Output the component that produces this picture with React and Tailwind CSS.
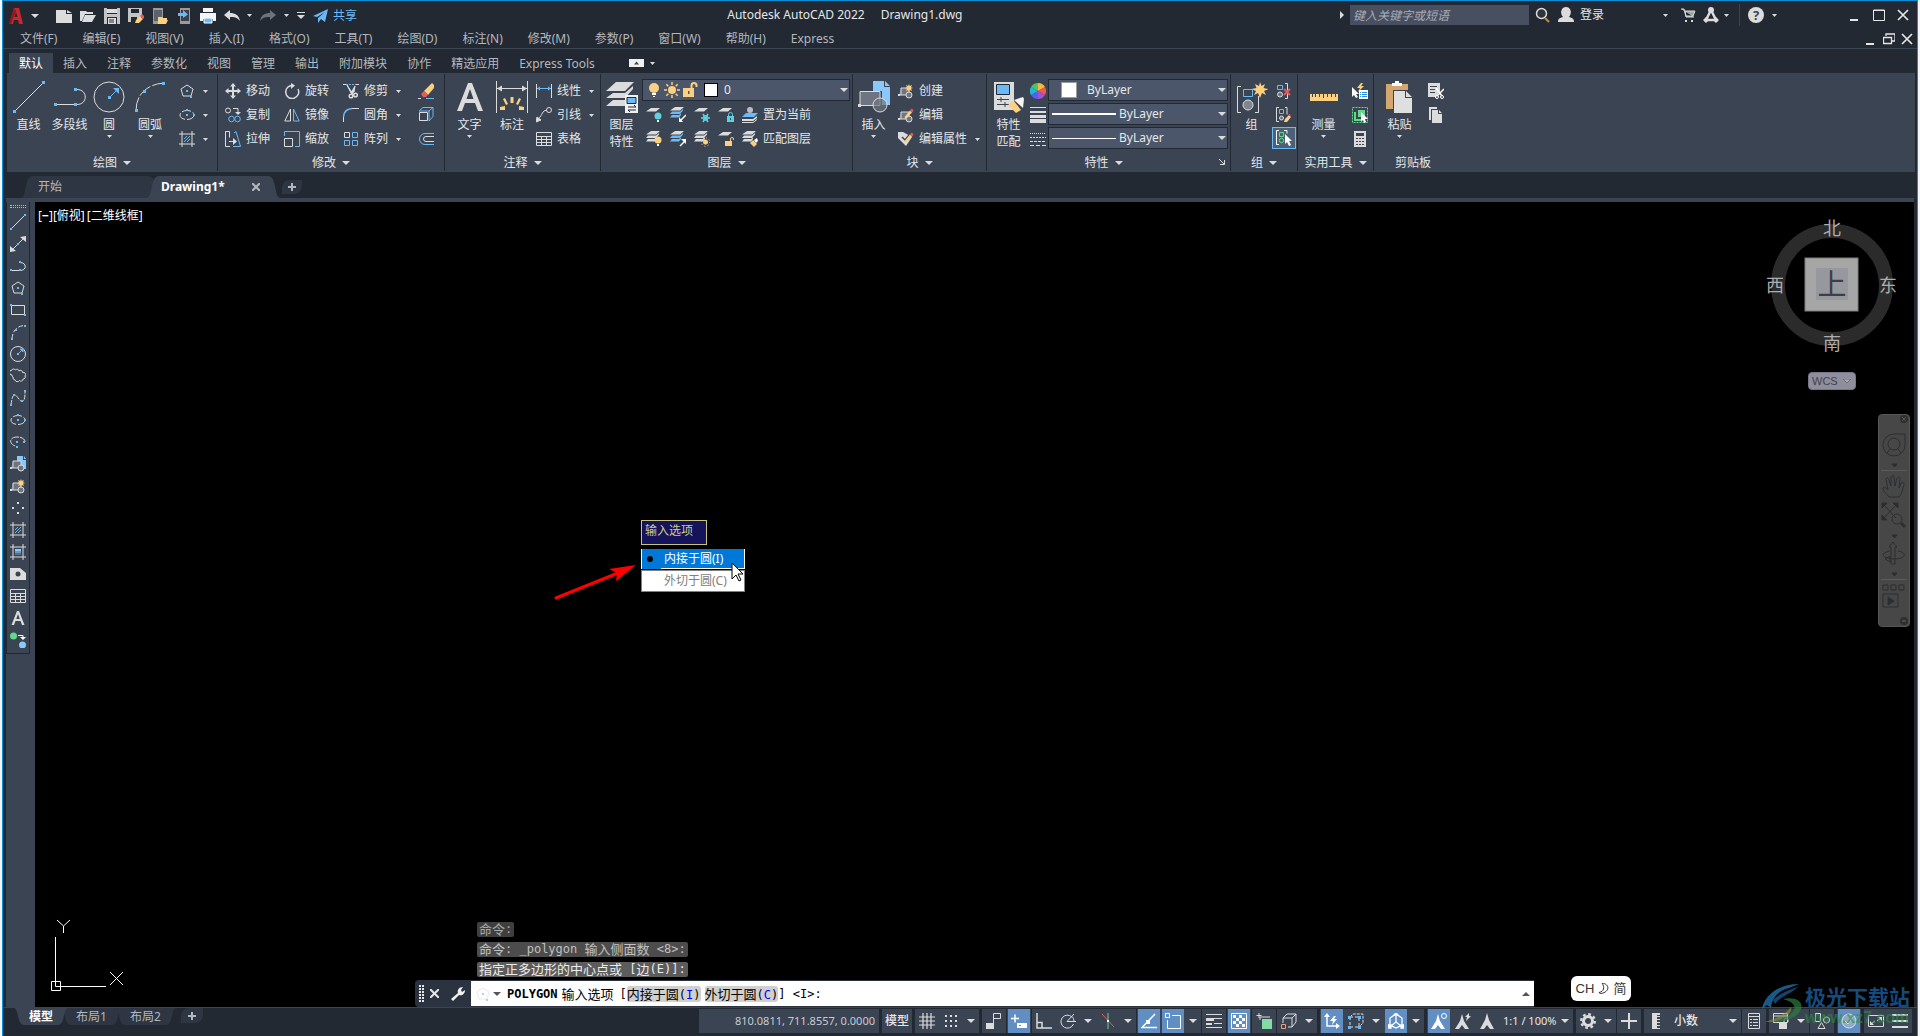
import React, { useState } from "react";

const L = "#dcdcdc";
const B = "#6cb9f7";
const Y = "#fbd080";
const G = "#62d98a";
const R = "#e8595c";
const C = "#5fd0dd";

// small square grip used by most drawing icons
const Sq = ({ x, y, c = B }) => (
  <rect x={x - 1} y={y - 1} width="2" height="2" fill={c} />
);

const Pencil = () => (
  <g>
    <path d="M7 9.500l5-6 2 2-5 5.500-2.500.8z" fill={Y} />
    <path d="M12 3.500l1.700-2 2 2-1.700 2z" fill={R} />
  </g>
);

const Star = ({ x = 11, y = 5 }) => (
  <path
    transform={`translate(${x} ${y})`}
    d="M0-4l.8 2L3-3l-1 2.200L4 0l-2 .8L3 3 .8 2 0 4l-.8-2L-3 3l1-2.200L-4 0l2-.8L-3-3l2.200 1z"
    fill={Y}
  />
);

const BlockBase = () => (
  <g>
    <path d="M3 5h8v7H1" fill="#6f7580" stroke={L} />
    <path d="M3 5v7" stroke={L} />
    <rect x="0" y="11" width="2" height="2" fill={L} />
    <circle cx="11" cy="12" r="3" fill="#6f7580" stroke={L} />
  </g>
);

const Sheet = ({ y, c = L }) => (
  <path d={`M5 ${y}h9l-4 3.500H0z`} fill={c} />
);

const Stack = ({ mid = L }) => (
  <g>
    <Sheet y={0} />
    <path d="M2 4.500h8l3-2.500v1.500L10 7H0z" fill={mid} />
    <path d="M2 8h7l2-1.500V8l-2 2.500H0z" fill={mid} />
  </g>
);

const Hatch = () => (
  <g>
    <path d="M3 0v16M13 0v16M0 3h16M0 13h16" stroke={L} />
    <path d="M5 8l3-3M5 11l6-6M8 11l3-3" stroke={B} />
  </g>
);

const icons = {
  newFile: <path d="M0 2h10v4h6v9H0zM11 2l5 3h-5z" fill={L} />,
  open: <path d="M0 3h6l1 1h6v2H5l-3 7H0zM5 7h11l-4 7H2z" fill={L} />,
  save: (
    <g>
      <path d="M0 0h16v16H0z" fill="#c4c4c4" />
      <path d="M3 0h10v6H3zM3 9h10v7H3z" fill="#222933" />
      <path d="M3 1h10v4H3zM4 10h8v6H4z" fill={L} />
      <path d="M5 12h5M5 14h5" stroke="#222933" />
    </g>
  ),
  saveAs: (
    <g>
      <path d="M0 0h14v8l-6 6H0z" fill="#c4c4c4" />
      <path d="M3 1h8v4H3zM3 9h6v5H3z" fill="#222933" />
      <path d="M7 15l1-3 4-4 3 3-4 4z" fill={Y} />
      <path d="M12 8l2-2 3 3-2 2z" fill={R} />
    </g>
  ),
  openMobile: (
    <g>
      <path d="M1 0h10v16H1z" fill="#9a9a9a" />
      <path d="M2 2h8v11H2z" fill="#5d636d" />
      <path d="M6 9h4l1 1h4v2h1l-2 4H6z" fill={Y} />
    </g>
  ),
  saveMobile: (
    <g>
      <path d="M4 0h10v16H4z" fill="#9a9a9a" />
      <path d="M5 2h8v11H5z" fill="#39404c" />
      <path d="M2 5h5V2l5 4.500L7 10V8H2z" fill={B} />
    </g>
  ),
  print: (
    <g>
      <path d="M3 0h10v4H3zM0 5h16v8h-3v-2H3v2H0z" fill="#f4f4f4" />
      <path d="M4 10h8v5H4z" fill={B} stroke="#fff" />
    </g>
  ),
  undo: <path d="M0 7l6-5v3c5 0 9 2 10 8-3-4-6-4-10-4v3z" fill={L} />,
  redo: <path d="M16 7l-6-5v3C5 5 1 7 0 13c3-4 6-4 10-4v3z" fill="#6d737c" />,
  plane: <path d="M0 8L15 1l-3 13-4-3-3 4v-5l7-6-8 5z" fill={B} />,

  polygon: (
    <g>
      <path d="M8 2l6 4-2 7H4L2 6z" fill="none" stroke={L} />
      <Sq x={8} y={8} />
      <Sq x={12} y={14} />
    </g>
  ),
  ellipse: (
    <g>
      <ellipse cx="8" cy="8" rx="7" ry="4.500" fill="none" stroke={L} strokeDasharray="9 2" />
      <Sq x={8} y={8} />
      <Sq x={8} y={3} />
      <Sq x={15} y={8} />
    </g>
  ),
  hatch: <Hatch />,
  move: (
    <path
      d="M8 0l3 3.500H9V7h3.500V5L16 8l-3.500 3V9H9v3.500h2L8 16l-3-3.500h2V9H3.500v2L0 8l3.500-3v2H7V3.500H5z"
      fill={L}
    />
  ),
  rotate: (
    <g>
      <path d="M9 2.500A6.500 6.500 0 1 0 14 6" fill="none" stroke={L} strokeWidth="1.500" />
      <path d="M7 0l4 2.500L7 6z" fill={L} />
    </g>
  ),
  trim: (
    <g>
      <path d="M0 1.500h3M13 1.500h3" stroke={L} />
      <path d="M3 1.500h10" stroke={B} strokeDasharray="2 1" />
      <path d="M4 2l6 9-2-1zM12 3l-1 6-3 1z" fill={L} stroke={L} />
      <circle cx="8" cy="13" r="1.800" fill="none" stroke={L} strokeWidth="1.500" />
      <circle cx="12.500" cy="12" r="1.800" fill="none" stroke={L} strokeWidth="1.500" />
    </g>
  ),
  erase: (
    <g>
      <path d="M6 8l8-8 2 2v3l-6 7z" fill={Y} />
      <path d="M6 8l4 4-2 2H5l-2-3z" fill={R} />
      <path d="M0 15.500h3" stroke={L} />
      <path d="M8 15.500h8" stroke={B} />
    </g>
  ),
  copy: (
    <g fill="none">
      <circle cx="3" cy="3.500" r="2.500" stroke={L} />
      <path d="M8 1.500h5v4" stroke={L} />
      <path d="M10 5h6l-3 3z" fill={L} />
      <circle cx="6.500" cy="12" r="2.800" stroke={B} />
      <circle cx="12.500" cy="12" r="2.800" stroke={B} />
    </g>
  ),
  mirror: (
    <g fill="none">
      <path d="M6.500 2v12H.8z" stroke={L} />
      <path d="M9.500 2v12h5.700z" stroke={B} />
    </g>
  ),
  fillet: (
    <g fill="none">
      <path d="M.5 15V10M9 1.500h7" stroke={L} />
      <path d="M.5 10Q1 2 9 1.500" stroke={B} strokeWidth="1.500" />
    </g>
  ),
  explode: (
    <g fill="none" stroke={B}>
      <path d="M1 4l4-3.500h10v9L11 14V4zM11 4l4-3.500" />
      <path d="M1.500 5.500h8v8h-8z" stroke={L} />
    </g>
  ),
  stretch: (
    <g fill="none">
      <path d="M5 15.500H.5V.5h4v6" stroke={L} />
      <path d="M9 2l2-1.500L15.500 15.500H8" stroke={B} />
      <path d="M4 10.500h5" stroke={L} />
      <path d="M8 7l4 3.500L8 14z" fill={L} />
    </g>
  ),
  scale: (
    <g fill="none">
      <path d="M.5 5V.5h15v15H11" stroke={B} />
      <path d="M.5 7.500h8v8h-8z" stroke={L} />
    </g>
  ),
  array: (
    <g fill="none">
      <path d="M1.500 1.500h5v5h-5z" stroke={L} />
      <path d="M9.500 1.500h5v5h-5zM1.500 9.500h5v5h-5zM9.500 9.500h5v5h-5z" stroke={B} />
    </g>
  ),
  offset: (
    <g fill="none">
      <path d="M16 2.500H7a5.500 5.500 0 0 0 0 11h9" stroke={B} />
      <path d="M16 5.500H8a2.500 2.500 0 0 0 0 5h8" stroke={L} />
    </g>
  ),

  linear: (
    <g>
      <path d="M.5 1v14M15.500 1v14" stroke={L} />
      <path d="M1 5.500h14" stroke={B} />
      <path d="M1 5.500l3-2v4zM15 5.500l-3-2v4z" fill={B} />
    </g>
  ),
  leader: (
    <g fill="none" stroke={L}>
      <circle cx="13" cy="3" r="2.500" />
      <path d="M10.500 3.500C6 3 7 8 2 12" />
      <path d="M0 15l1-5 4 3z" fill={L} />
    </g>
  ),
  table: (
    <g fill="none" stroke={L}>
      <path d="M.5 1.500h15v13H.5zM.5 5.500h15M.5 8.500h15M.5 11.500h15M5.500 5v9M10.500 5v9" />
    </g>
  ),

  layOff: (
    <g>
      <Sheet y={1} />
      <circle cx="12" cy="9" r="3.500" fill={C} />
      <rect x="11" y="13" width="2" height="2" fill="#fff" />
    </g>
  ),
  layIso: (
    <g>
      <Stack mid={B} />
      <path d="M16 8l-5 5" stroke="#fff" strokeWidth="1.500" />
      <path d="M9 15v-5l4 5z" fill="#fff" />
    </g>
  ),
  layFreeze: (
    <g>
      <Sheet y={1} />
      <path d="M7 11h9M9 7l5 8M14 7l-5 8" stroke={C} strokeWidth="1.500" />
      <circle cx="11.500" cy="11" r="2.500" fill="none" stroke={C} />
    </g>
  ),
  layLock: (
    <g>
      <Sheet y={1} />
      <rect x="9" y="9" width="7" height="6" fill={C} />
      <path d="M10.500 9V7.500a2 2 0 0 1 4 0V9" fill="none" stroke={C} />
      <rect x="12" y="11" width="1" height="2" fill="#3b4453" />
    </g>
  ),
  layCurrent: (
    <g>
      <path d="M4 6h12l-4 4H0z" fill={B} />
      <path d="M0 12h11l4-3v2l-4 3H0zM0 15h11l4-3v1l-4 3H0z" fill={L} />
      <circle cx="8" cy="3" r="3" fill="#b9bcc2" />
    </g>
  ),
  layOn: (
    <g>
      <Stack />
      <circle cx="12" cy="9" r="3.500" fill={Y} />
      <rect x="11" y="13" width="2" height="2" fill="#fff" />
    </g>
  ),
  layUniso: (
    <g>
      <Stack mid={B} />
      <path d="M10 15l5-5" stroke="#fff" strokeWidth="1.500" />
      <path d="M16 8v5l-5-5z" fill="#fff" />
    </g>
  ),
  layThaw: (
    <g>
      <Stack />
      <circle cx="11.500" cy="11" r="2.500" fill={Y} />
      <circle cx="11.500" cy="11" r="4.200" fill="none" stroke={Y} strokeDasharray="1 2.300" />
    </g>
  ),
  layUnlock: (
    <g>
      <Sheet y={1} />
      <rect x="7" y="10" width="7" height="5" fill={Y} />
      <path d="M12.500 10V8a1.500 1.500 0 0 1 3 0v1" fill="none" stroke={Y} />
    </g>
  ),
  layMatch: (
    <g>
      <Stack />
      <path d="M8 12l3-3 4 4-3 3z" fill={Y} />
      <path d="M12 9l3-2 1 3-2 2z" fill="#fff" />
    </g>
  ),
  bulb: (
    <g>
      <circle cx="8" cy="6" r="5" fill={Y} />
      <path d="M6 11h4v2H6zM7 14h2v1H7z" fill="#fff" />
    </g>
  ),
  sun: (
    <g>
      <circle cx="8" cy="8" r="4" fill={Y} />
      <path
        d="M8 0v3M8 13v3M0 8h3M13 8h3M2.300 2.300l2 2M11.700 11.700l2 2M2.300 13.700l2-2M11.700 4.300l2-2"
        stroke={Y}
        strokeWidth="1.500"
      />
    </g>
  ),
  unlock: (
    <g>
      <rect x="1" y="6" width="11" height="9" fill={Y} />
      <path d="M9.500 6V3.500a2.500 2.500 0 0 1 5 0V5" fill="none" stroke={Y} strokeWidth="2" />
      <rect x="6" y="9" width="1.500" height="3" fill="#4c566a" />
    </g>
  ),

  blkCreate: (
    <g>
      <BlockBase />
      <Star />
    </g>
  ),
  blkEdit: (
    <g>
      <BlockBase />
      <Pencil />
    </g>
  ),
  blkAttr: (
    <g>
      <path d="M0 1h5l9 5-6 9L0 7z" fill={L} />
      <path d="M4 6l3 3 4-5" fill="none" stroke="#3b4453" strokeWidth="1.500" />
      <Pencil />
    </g>
  ),

  wheel: (
    <g>
      <path d="M8 8V0a8 8 0 0 1 7 4z" fill="#f5b942" />
      <path d="M8 8l7-4a8 8 0 0 1 0 8z" fill="#f0584f" />
      <path d="M8 8l7 4a8 8 0 0 1-7 4z" fill="#a34fd6" />
      <path d="M8 8v8a8 8 0 0 1-7-4z" fill="#5160f0" />
      <path d="M8 8l-7 4a8 8 0 0 1 0-8z" fill="#25b5d8" />
      <path d="M8 8L1 4a8 8 0 0 1 7-4z" fill="#4dc460" />
    </g>
  ),
  weights: <path d="M0 0h16v1H0zM0 4h16v2H0zM0 8h16v3H0zM0 12h16v4H0z" fill={L} />,
  ltypes: (
    <g stroke={L}>
      <path d="M0 2.500h16" strokeDasharray="1 1" />
      <path d="M0 6.500h16" strokeDasharray="2 1" />
      <path d="M0 10.500h16" strokeDasharray="3 1" />
      <path d="M0 14.500h16" strokeDasharray="4 2" />
    </g>
  ),

  ungroup: (
    <g fill="none">
      <path d="M1.500 2.500h5v4h-5z" stroke={B} />
      <circle cx="4" cy="11.500" r="2.500" fill="#6f7580" stroke={L} />
      <path d="M9 .5h2.500v15H9" stroke={L} />
      <path d="M8 6l6 6M14 6l-6 6" stroke={R} strokeWidth="2" />
    </g>
  ),
  groupEdit: (
    <g fill="none">
      <path d="M3 .5H.5v14H3M9 .5h2v7" stroke={L} />
      <path d="M3.500 2.500h4v4h-4z" stroke={B} />
      <circle cx="5.500" cy="11" r="2" fill="#6f7580" stroke={L} />
      <path d="M8 15l1-3 4-4 2 2-4 5z" fill={Y} />
      <path d="M12 8l2-1 1 3z" fill={R} />
    </g>
  ),
  groupSel: (
    <g fill="none">
      <path d="M3 .5H.5v14H3M8 .5h3v3" stroke="#fff" />
      <path d="M3.500 2.500h4v4h-4z" stroke={G} />
      <circle cx="5.500" cy="10.500" r="2.200" stroke={G} />
      <path d="M9 4v10l2-2 2 4 2-1-2-4h3z" fill="#fff" />
    </g>
  ),
  quickSel: (
    <g>
      <path d="M0 4v10l2-2 2 3 2-1-2-3h3z" fill="#fff" />
      <path d="M9 0L5 5h3L6 9l6-6H9l2-3z" fill={Y} />
      <path d="M7 7h9v9H7z" fill="#fff" />
      <path d="M8 9.500h1M10 9.500h5M8 11.500h1M10 11.500h5M8 13.500h1M10 13.500h5" stroke="#2c8ce0" />
    </g>
  ),
  selectAll: (
    <g>
      <path d="M.5.500h15v15H.5z" fill="none" stroke={G} strokeDasharray="2 1" />
      <path d="M6 3h7v7H6z" fill={G} />
      <path d="M3 5v8h6" fill="none" stroke={G} strokeWidth="2" />
      <path d="M9 5v10l2-2 1 3 2-1-1-3h3z" fill="#fff" />
    </g>
  ),
  calc: (
    <g>
      <path d="M2 0h12v16H2z" fill={L} />
      <path d="M4 2h8v3H4zM4 7h2v1H4zM7 7h2v1H7zM10 7h2v1h-2zM4 10h2v1H4zM7 10h2v1H7zM10 10h2v1h-2zM4 13h2v1H4zM7 13h2v1H7zM10 13h2v1h-2z" fill="#3b4453" />
    </g>
  ),
  cut: (
    <g>
      <path d="M0 0h12v8l-4 6H0z" fill={L} />
      <path d="M2 3.500h7M2 6.500h5M2 9.500h5" stroke="#3b4453" />
      <path d="M8 5l6 8M16 6l-7 7" stroke="#fff" strokeWidth="1.500" />
      <circle cx="9" cy="14" r="1.500" fill="none" stroke="#fff" />
      <circle cx="14" cy="14" r="1.500" fill="none" stroke="#fff" />
    </g>
  ),
  copyClip: (
    <g>
      <path d="M1 0h8v2H3v11H1z" fill={L} />
      <path d="M4 3h6v4h4v9H4zM11 3l3 3h-3z" fill={L} />
    </g>
  ),

  line: (
    <g>
      <path d="M1 15L15 1" stroke={L} />
      <Sq x={1} y={15} />
      <Sq x={15} y={1} />
    </g>
  ),
  xline: (
    <g>
      <path d="M2 14L14 2" stroke={L} />
      <path d="M16 0v6l-6-5zM0 16v-6l6 5z" fill={L} />
      <Sq x={8} y={8} />
    </g>
  ),
  pline: (
    <g fill="none">
      <path d="M1 12.500h9M10 4.500c7 0 7 8 0 8" stroke={L} />
      <Sq x={1} y={12} />
      <Sq x={10} y={12} />
      <Sq x={10} y={4} />
    </g>
  ),
  rect: (
    <g fill="none">
      <path d="M1.500 3.500h13v9h-13z" stroke={L} />
      <Sq x={1} y={3} />
      <Sq x={15} y={13} />
    </g>
  ),
  arc: (
    <g fill="none">
      <path d="M2 15Q3 2 15 1.500" stroke={L} strokeDasharray="5 2" />
      <Sq x={2} y={15} />
      <Sq x={6} y={6} />
      <Sq x={15} y={2} />
    </g>
  ),
  circle: (
    <g fill="none">
      <circle cx="8" cy="8" r="7.500" stroke={L} />
      <Sq x={8} y={8} />
      <path d="M10 3h3v3zM9 7l3-3" fill={B} stroke={B} />
    </g>
  ),
  revcloud: (
    <path
      d="M2 7a2.500 2.500 0 0 1 0-5 2 2 0 0 1 3.500 0 2 2 0 0 1 3.500 1 2 2 0 0 1 3.500 1.500A2.200 2.200 0 0 1 15 8a2 2 0 0 1-2 3 2 2 0 0 1-3.500 1.500A2.500 2.500 0 0 1 5 12a2.500 2.500 0 0 1-2-3A2 2 0 0 1 2 7z"
      fill="none"
      stroke={L}
    />
  ),
  spline: (
    <g fill="none">
      <path d="M1 15C2 7 3 5 5 5s5 8 8 6c2-1 2-6 2-10" stroke={L} strokeDasharray="5 1" />
      <Sq x={1} y={15} />
      <Sq x={4} y={5} />
      <Sq x={12} y={11} />
      <Sq x={15} y={1} />
    </g>
  ),
  ellArc: (
    <g fill="none">
      <path d="M5 12C-2 9 0 3 7 3c5 0 8 2 8 5" stroke={L} strokeDasharray="8 1" />
      <Sq x={7} y={8} />
      <Sq x={7} y={13} />
      <Sq x={14} y={8} />
    </g>
  ),
  insBlock: (
    <g>
      <path d="M7 0h6v4h3v9h-5V5H7z" fill="#8ac8fb" />
      <path d="M14 0l2 3h-2z" fill="#8ac8fb" />
      <BlockBase />
    </g>
  ),
  point: (
    <g fill={L}>
      <Sq x={8} y={3} c={L} />
      <Sq x={3} y={8} c={L} />
      <Sq x={13} y={8} c={L} />
      <Sq x={8} y={13} c={L} />
    </g>
  ),
  gradient: (
    <g>
      <path d="M3 0v16M13 0v16M0 3h16M0 13h16" stroke={L} />
      <path d="M5 5h6v2H5z" fill="#8ac8fb" />
      <path d="M5 7h6v2H5z" fill="#6c99bd" />
      <path d="M5 9h6v2H5z" fill="#56708c" />
    </g>
  ),
  region: (
    <g>
      <path d="M0 2h10l6 5v7H0z" fill={L} />
      <circle cx="8" cy="8" r="2.500" fill="#3b4453" />
    </g>
  ),
  addSel: (
    <g>
      <circle cx="3.500" cy="4" r="3.500" fill={G} />
      <circle cx="12.500" cy="13" r="3.500" fill="#8ac8fb" />
      <path d="M8 3.500h5v2" fill="none" stroke="#fff" />
      <path d="M10 5h6l-3 3z" fill="#fff" />
    </g>
  ),

  stGrid: <path d="M4 0v16M8 0v16M12 0v16M0 4h16M0 8h16M0 12h16" stroke={L} strokeWidth="1.200" />,
  stSnap: (
    <path
      d="M2 2h2v2H2zM7 2h2v2H7zM12 2h2v2h-2zM2 7h2v2H2zM7 7h2v2H7zM12 7h2v2h-2zM2 12h2v2H2zM7 12h2v2H7zM12 12h2v2h-2z"
      fill={L}
    />
  ),
  stInfer: (
    <g>
      <path d="M0 10h8v6H0z" fill={L} />
      <path d="M7.500 10V.500h7v5h-7" fill="none" stroke={L} />
    </g>
  ),
  stDyn: (
    <g>
      <path d="M0 5.500h8M4 1.500v8" stroke="#fff" strokeWidth="1.500" />
      <path d="M6 10h10v5H6z" fill="#fff" />
      <path d="M8 12.500h2" stroke="#618fc3" />
    </g>
  ),
  stOrtho: <path d="M1 0v15h15M1 9.500h5V15" fill="none" stroke={L} strokeWidth="1.500" />,
  stPolar: (
    <g fill="none" stroke={L}>
      <path d="M12 4a6.500 6.500 0 1 0 1.500 7" />
      <path d="M7 8.500h9M7 8.500L14 1M14 8.500c0-2-1-4-2-5" />
    </g>
  ),
  stIso: (
    <g>
      <path d="M2 1l12 13" stroke={R} />
      <path d="M8 0v16" stroke={G} />
      <rect x="7" y="7" width="2" height="2" fill="#fff" />
    </g>
  ),
  stTrack: (
    <g>
      <path d="M14 1L1 14.500h15" fill="none" stroke="#fff" strokeWidth="1.500" />
      <path d="M5 7h4v4H5z" fill="#fff" />
    </g>
  ),
  stOsnap: (
    <g fill="none" stroke="#fff">
      <path d="M7 2.500h8.500v13h-13V7" />
      <path d="M.5.500h4v4h-4z" />
    </g>
  ),
  stLw: <path d="M0 1h16v1H0zM0 5h8v3H0zM8 5h8v1H8zM0 10h6v2H0zM8 10h8v1H8zM0 14h16v1H0z" fill={L} />,
  stTrans: (
    <g>
      <path d="M.5.500h15v15H.5z" fill="none" stroke="#fff" />
      <path d="M2 2h3v3H2zM8 2h3v3H8zM5 5h3v3H5zM11 5h3v3h-3zM2 8h3v3H2zM8 8h3v3H8zM5 11h3v3H5zM11 11h3v3h-3z" fill="#fff" />
    </g>
  ),
  stCycle: (
    <g>
      <path d="M3 0v5M.500 2.500h5" stroke={L} />
      <path d="M4 7V4h10" fill="none" stroke={L} />
      <path d="M6 6h10v10H6z" fill="#83dca5" />
    </g>
  ),
  st3d: (
    <g fill="none" stroke={L}>
      <path d="M2 10V5l4-4h9v8l-4 5H7M2 5h9v9M11 5l4-4" />
      <path d="M.5 11.500h4v4h-4z" stroke="#f0a070" />
    </g>
  ),
  stUcs: (
    <g>
      <path d="M3 2v11h11" fill="none" stroke="#fff" strokeWidth="1.500" />
      <path d="M3 0l3 4H0zM16 13l-4-3v6zM10 3L6 8h3l-1 4 5-6h-3l2-3z" fill="#fff" />
    </g>
  ),
  stFilter: (
    <g fill="none" stroke={L}>
      <path d="M2 4l3-3h10v9l-4 4" strokeDasharray="3 1" />
      <path d="M2 4h9v10H2z" strokeDasharray="3 2" />
      <path d="M0 3h3v3H0zM10 3h3v3h-3zM0 13h3v3H0zM10 13h3v3h-3z" fill={B} stroke="none" />
    </g>
  ),
  stGizmo: (
    <g fill="none" stroke="#fff" strokeWidth="1.300">
      <path d="M8 1l6 4v7l-6 3-6-3V5zM8 3v6M8 9l5 4M8 9l-5 4" />
      <path d="M6 2l2-2 2 2zM0 12h3v3H0zM13 12h3v3h-3z" fill="#fff" />
    </g>
  ),
  stAnnoVis: (
    <g>
      <path d="M7 1L5 8l-5 8h4l3-4 3 4h4L9 8z" fill="#fff" />
      <circle cx="13" cy="3" r="2.500" fill="none" stroke="#fff" />
    </g>
  ),
  stAnnoAuto: (
    <g>
      <path d="M7 1L5 8l-5 8h4l3-4 3 4h4L9 8z" fill={L} />
      <path d="M14 0l-4 4h2l-1 4 5-5h-2z" fill={L} />
    </g>
  ),
  stAnno: <path d="M8 0L6 7l-5 9h4l3-4 3 4h4l-5-9z" fill={L} />,
  stGear: (
    <g>
      <circle cx="8" cy="8" r="4.500" fill="none" stroke={L} strokeWidth="3" />
      <circle cx="8" cy="8" r="6.800" fill="none" stroke={L} strokeWidth="2.400" strokeDasharray="2.700 2.640" />
    </g>
  ),
  stPlus: <path d="M8 0v16M0 8h16" stroke={L} strokeWidth="2" />,
  stRuler: <path d="M4 0h8v2H9v1h3v1H9v2h3v1H9v2h3v1H9v2h3v1H9v2h3v1H4z" fill={L} />,
  stProps: (
    <g fill="none" stroke={L}>
      <path d="M2.500.5h11v15h-11zM2 3.500h11" />
      <path d="M4 6.500h2M7 6.500h5M4 9.500h2M7 9.500h5M4 12.500h2M7 12.500h5" />
    </g>
  ),
  stLockUi: (
    <g>
      <path d="M.5.500h14v9H.5zM0 3h14" fill="none" stroke={L} />
      <path d="M6 9h8v7H6z" fill={L} />
      <path d="M11 9V7a2 2 0 0 1 4 0v2" fill="none" stroke={L} />
    </g>
  ),
  stIsolate: (
    <g fill="none" stroke={L}>
      <path d="M1.500.5h5v8h-5z" />
      <circle cx="12.500" cy="7" r="3" />
      <path d="M4 15.500l3.500-6 3.500 6z" />
    </g>
  ),
  stHw: (
    <g fill="none" stroke={L}>
      <circle cx="8" cy="8" r="7" fill="#8fa9c8" />
      <path d="M4 8l3 3 5-7" />
    </g>
  ),
  stClean: (
    <g fill="none" stroke={L}>
      <path d="M.5 2.500h15v11H.5zM9 8l4-3M7 8l-4 3" />
      <path d="M14 4v4l-4-4zM2 12V8l4 4z" fill={L} stroke="none" />
    </g>
  ),
  stMenu: <path d="M0 1h16v2H0zM0 7h16v2H0zM0 13h16v2H0z" fill={L} />,
};

const Icon = ({ name }) => (
  <svg className="size-4 shrink-0" viewBox="0 0 16 16" aria-hidden="true">
    {icons[name]}
  </svg>
);

const Tri = () => (
  <svg className="h-1 w-2 shrink-0" viewBox="0 0 8 4" aria-hidden="true">
    <path d="M0 0h8L4 4z" fill={L} />
  </svg>
);

const SmallTri = () => (
  <svg className="h-[3px] w-[5px] shrink-0" viewBox="0 0 5 3" aria-hidden="true">
    <path d="M0 0h5L2.500 3z" fill={L} />
  </svg>
);

const bigIcons = {
  line: (
    <g>
      <path d="M2 30L30 2" stroke={L} />
      <path d="M0 29h3v3H0zM29 0h3v3h-3z" fill={B} />
    </g>
  ),
  pline: (
    <g>
      <path d="M2 23.500h19M21 8.500h2c11 0 11 15 0 15h-2" fill="none" stroke={L} />
      <path d="M0 22h3v3H0zM20 22h3v3h-3zM20 7h3v3h-3z" fill={B} />
    </g>
  ),
  circle: (
    <g>
      <circle cx="16" cy="16" r="15" fill="none" stroke={L} />
      <path d="M15 15h3v3h-3zM20 7h6v6z" fill={B} />
      <path d="M17 16l7-7" stroke={B} />
    </g>
  ),
  arc: (
    <g>
      <path d="M2 30Q2 17 10 10Q17 3 30 2" fill="none" stroke={L} strokeDasharray="14 2" />
      <path d="M1 28h3v3H1zM9 9h3v3H9zM28 1h3v3h-3z" fill={B} />
    </g>
  ),
  text: <path d="M3 30L14 2h4l11 28h-5l-3-8H11l-3 8zM12.500 18h7L16 8z" fill={L} />,
  dim: (
    <g>
      <path d="M.5 0v32M31.500 0v32M1 7.500h30" stroke={L} />
      <path d="M1 7.500l5-3v6zM31 7.500l-5-3v6z" fill={L} />
      <path d="M14.500 16h3v6h-3zM7 18l2-1 3 6-2 1zM25 18l-2-1-3 6 2 1zM4 26l5-1v4H4zM28 26l-5-1v4h5z" fill={Y} />
    </g>
  ),
  layers: (
    <g>
      <path d="M10 1h18l-9 9H0z" fill={L} />
      <path d="M7 12h12l8-7v3l-8 9H0z" fill={L} />
      <path d="M7 19h12l4-3v4l-4 5H0z" fill={L} />
      <path d="M19 14h13v18H19z" fill="#f0f0f0" />
      <path d="M21 16.500h9v6h-9z" fill={B} stroke="#222933" />
      <path d="M22 26h8l-2-2M30 29h-8l2 2" fill="none" stroke="#222933" />
    </g>
  ),
  insert: (
    <g>
      <path d="M15 0h11v6h6v18h-8V10h-9zM27 0l5 5h-5z" fill="#8ac8fb" />
      <path d="M2 24.500V10.500h20v14H0" fill="#6f7580" stroke={L} />
      <rect x="0" y="23" width="3" height="3" fill={L} />
      <circle cx="22" cy="24" r="7" fill="#6f7580" fillOpacity="0.700" stroke={L} />
    </g>
  ),
  match: (
    <g>
      <path d="M1 1h20v28H1z" fill={L} />
      <path d="M3.500 3.500h13v10h-13z" fill={B} stroke="#222933" />
      <path d="M4 18.500h12M4 23.500h12M8 16v5M12 21v5" stroke="#3b4453" />
      <path d="M15 24l6-4 7 9-5 3z" fill={Y} />
      <path d="M21 19l9-3 1 2-1 9z" fill="#f4f4f4" />
    </g>
  ),
  group: (
    <g fill="none">
      <path d="M5 5.500H1.500v26H5M19 31.500h3.500V15" stroke={L} />
      <path d="M7.500 8.500h9v7h-9z" stroke={B} />
      <circle cx="12" cy="24" r="5" fill="#7f858f" stroke={L} />
      <path
        d="M24 1l1.500 4L29 3l-1.500 4 5 1-4.500 2 2 4-4-2-2 5-2-5-4 2 2-4-4.500-2 5-1L19 3l4 2z"
        fill={Y}
      />
    </g>
  ),
  measure: (
    <path d="M2 13h2v3h1v-3h2v3h1v-3h3v3h1v-3h3v4h1v-4h3v3h1v-3h3v3h1v-3h3v3h1v-3h2v7H2z" fill={Y} />
  ),
  paste: (
    <g>
      <path d="M2 3h22v25H2z" fill="#d3a76e" />
      <path d="M8 2h3V0h4v2h3v3H8z" fill="#fff" />
      <path d="M9 9h19v23H9z" fill="#3b4453" />
      <path d="M10 10h11v7h7v15H10zM22 10l6 6h-6z" fill="#dfdfdf" />
    </g>
  ),
};

const Big = ({ icon, label, label2, arrow, w = "w-[41px]" }) => (
  <button className={`flex shrink-0 flex-col items-center pt-0.5 ${w}`}>
    <svg className="size-8 shrink-0" viewBox="0 0 32 32" aria-hidden="true">
      {bigIcons[icon]}
    </svg>
    <span className="mt-[3px] leading-[17px] whitespace-nowrap">{label}</span>
    {label2 && <span className="leading-[17px]">{label2}</span>}
    {arrow && (
      <span className="mt-0.5">
        <SmallTri />
      </span>
    )}
  </button>
);

const Small = ({ icon, label, arrow }) => (
  <button className="flex h-6 items-center gap-[5px] whitespace-nowrap" aria-label={label || icon}>
    <Icon name={icon} />
    {label}
    {arrow && (
      <span className="ml-[3px]">
        <SmallTri />
      </span>
    )}
  </button>
);

const Panel = ({ title, w, pad = "", children, arrow = true, corner }) => (
  <section className={`relative my-px flex shrink-0 flex-col border-r border-[#222933] pt-[5px] ${w}`}>
    <div className={`flex h-[72px] ${pad}`}>{children}</div>
    <h2 className={`mt-1 flex h-4 items-center justify-center gap-1.5 ${corner ? "pr-2.5" : ""}`}>
      {title}
      {arrow && <Tri />}
    </h2>
    {corner && (
      <svg className="absolute right-[5px] bottom-1.5 size-[6px]" viewBox="0 0 6 6" aria-hidden="true">
        <path d="M0 0l5 5M5.500 1v4.500H1" fill="none" stroke={L} />
      </svg>
    )}
  </section>
);

const menus = [
  "文件(F)",
  "编辑(E)",
  "视图(V)",
  "插入(I)",
  "格式(O)",
  "工具(T)",
  "绘图(D)",
  "标注(N)",
  "修改(M)",
  "参数(P)",
  "窗口(W)",
  "帮助(H)",
  "Express",
];

const ribbonTabs = [
  "默认",
  "插入",
  "注释",
  "参数化",
  "视图",
  "管理",
  "输出",
  "附加模块",
  "协作",
  "精选应用",
  "Express Tools",
];

const TitleBar = () => (
  <header className="flex h-7 items-center pr-2">
    <div className="flex w-[38%] shrink-0 items-center pt-px pl-1.5">
      <button aria-label="A" className="flex items-center gap-1.5">
        <svg className="size-4" viewBox="0 0 16 16">
          <path d="M5 0h5l4 16h-4l-1-4H5l-1 4H0zM7 4L5.500 9h3z" fill="#c8282d" />
          <path d="M5 0L0 16h2L7 3z" fill="#8f1a1f" />
        </svg>
        <Tri />
      </button>
      <div className="ml-[17px] flex gap-2">
        {["newFile", "open", "save", "saveAs", "openMobile", "saveMobile", "print", "undo"].map((n) => (
          <button key={n} aria-label={n}>
            <Icon name={n} />
          </button>
        ))}
      </div>
      <div className="ml-[7px] flex items-center gap-2">
        <SmallTri />
        <button aria-label="redo">
          <Icon name="redo" />
        </button>
        <SmallTri />
        <svg className="h-2 w-2" viewBox="0 0 8 8">
          <path d="M0 0h8v1H0zM0 3h8L4 7z" fill={L} />
        </svg>
      </div>
      <button className="ml-2 flex items-center gap-1 text-[#6cb9f7]">
        <Icon name="plane" />
        共享
      </button>
    </div>
    <h1 className="flex gap-4 pb-px whitespace-nowrap text-[#e6e6e6]">
      <span>Autodesk AutoCAD 2022</span>
      <span>Drawing1.dwg</span>
    </h1>
    <div className="flex flex-1 items-center justify-end">
      <svg className="mr-1.5 h-2 w-1" viewBox="0 0 4 8">
        <path d="M0 0l4 4-4 4z" fill={L} />
      </svg>
      <input
        aria-label="搜索"
        placeholder="键入关键字或短语"
        className="h-5 w-[179px] bg-[#474f61] px-[3px] italic outline-none placeholder:text-[#a9adb5]"
      />
      <svg className="ml-1.5 size-4" viewBox="0 0 16 16">
        <circle cx="6.500" cy="6.500" r="5" fill="#30343c" stroke={L} strokeWidth="1.500" />
        <path d="M10 11l4 4" stroke="#b98d55" strokeWidth="2" />
      </svg>
      <button className="ml-[7px] flex w-[88px] items-center gap-1.5">
        <svg className="size-4" viewBox="0 0 16 16">
          <path d="M0 15c0-4 2-4 5-5C1 5 4 0 8 0s7 5 3 10c3 1 5 1 5 5z" fill={L} />
        </svg>
        登录
      </button>
      <span className="ml-[17px]">
        <SmallTri />
      </span>
      <svg className="ml-3 size-4" viewBox="0 0 16 16">
        <path d="M1 2h3l2 8h8M5 4h10l-2 5H6z" fill="#a6a6a6" stroke={L} />
        <path d="M5 13h2v2H5zM11 13h2v2h-2z" fill={L} />
      </svg>
      <svg className="ml-[7px] size-4" viewBox="0 0 16 16">
        <path d="M8 3L3 13h10z" fill="none" stroke={L} strokeWidth="2.500" />
        <circle cx="8" cy="3" r="3" fill={L} />
        <path d="M0 13l3-3 3 3-3 3zM10 13l3-3 3 3-3 3z" fill={L} />
      </svg>
      <span className="ml-[5px]">
        <SmallTri />
      </span>
      <span className="ml-2.5 h-[22px] w-px bg-[#3b4453]" />
      <button className="ml-2 flex size-4 items-center justify-center rounded-full bg-[#dcdcdc] text-[13px] font-bold text-[#3b4453]">
        ?
      </button>
      <span className="ml-2">
        <SmallTri />
      </span>
      <div className="ml-[72px] flex items-center gap-3">
        <WinIcon kind="min" />
        <WinIcon kind="max" />
        <WinIcon kind="close" />
      </div>
    </div>
  </header>
);

const winPaths = {
  min: <path d="M1 10h8v2H1z" fill="#e6e6e6" />,
  max: <path d="M.5 1h11v10.500H.5zM0 1.500h12" fill="none" stroke="#e6e6e6" />,
  restore: <path d="M3 3V1h9v7H9M.5 4.500h8v6h-8z" fill="none" stroke="#e6e6e6" strokeWidth="1.300" />,
  close: <path d="M1 1l10 10M11 1L1 11" stroke="#e6e6e6" strokeWidth="1.700" />,
};

const WinIcon = ({ kind }) => (
  <button aria-label={kind}>
    <svg className="block size-3" viewBox="0 0 12 12">
      {winPaths[kind]}
    </svg>
  </button>
);

const Arrow = () => (
  <span className="ml-auto">
    <Tri />
  </span>
);

const Ribbon = () => (
  <div className="mr-0.5 ml-1 flex h-[99px] bg-[#3b4453] text-[#e4e6e8]">
    <Panel title="绘图" w="w-[211px]" pad="pl-px">
      <Big icon="line" label="直线" />
      <Big icon="pline" label="多段线" />
      <Big icon="circle" label="圆" arrow w="w-[38px]" />
      <Big icon="arc" label="圆弧" arrow w="w-11" />
      <div className="ml-[7px]">
        <Small icon="polygon" arrow />
        <Small icon="ellipse" arrow />
        <Small icon="hatch" arrow />
      </div>
    </Panel>
    <Panel title="修改" w="w-[227px]" pad="pl-[7px]">
      <div className="grid grid-cols-[59px_59px_75px_16px]">
        <Small icon="move" label="移动" />
        <Small icon="rotate" label="旋转" />
        <Small icon="trim" label="修剪" arrow />
        <Small icon="erase" />
        <Small icon="copy" label="复制" />
        <Small icon="mirror" label="镜像" />
        <Small icon="fillet" label="圆角" arrow />
        <Small icon="explode" />
        <Small icon="stretch" label="拉伸" />
        <Small icon="scale" label="缩放" />
        <Small icon="array" label="阵列" arrow />
        <Small icon="offset" />
      </div>
    </Panel>
    <Panel title="注释" w="w-[156px]" pad="pl-1">
      <Big icon="text" label="文字" arrow />
      <Big icon="dim" label="标注" w="w-11" />
      <div className="ml-0.5">
        <Small icon="linear" label="线性" arrow />
        <Small icon="leader" label="引线" arrow />
        <Small icon="table" label="表格" />
      </div>
    </Panel>
    <Panel title="图层" w="w-[252px]">
      <Big icon="layers" label="图层" label2="特性" />
      <div className="flex flex-1 flex-col pr-0.5">
        <label className="flex h-[22px] items-center border border-[#222933] bg-[#4c566a] pr-px pl-[3px]">
          <Icon name="bulb" />
          <span className="ml-[2px] flex gap-[2px]">
            <Icon name="sun" />
            <Icon name="unlock" />
          </span>
          <span className="ml-1.5 size-3.5 shrink-0 border border-black bg-white" />
          <select aria-label="图层" className="ml-1.5 w-20 flex-1 appearance-none outline-none">
            <option>0</option>
          </select>
          <Arrow />
        </label>
        <div className="mt-0.5 ml-1 flex h-6 gap-2">
          <Small icon="layOff" />
          <Small icon="layIso" />
          <Small icon="layFreeze" />
          <Small icon="layLock" />
          <Small icon="layCurrent" label="置为当前" />
        </div>
        <div className="ml-1 flex h-6 gap-2">
          <Small icon="layOn" />
          <Small icon="layUniso" />
          <Small icon="layThaw" />
          <Small icon="layUnlock" />
          <Small icon="layMatch" label="匹配图层" />
        </div>
      </div>
    </Panel>
    <Panel title="块" w="w-[134px]">
      <Big icon="insert" label="插入" arrow />
      <div className="ml-1">
        <Small icon="blkCreate" label="创建" />
        <Small icon="blkEdit" label="编辑" />
        <Small icon="blkAttr" label="编辑属性" arrow />
      </div>
    </Panel>
    <Panel title="特性" w="w-[244px]" corner>
      <Big icon="match" label="特性" label2="匹配" w="w-[43px]" />
      <div>
        <Small icon="wheel" />
        <Small icon="weights" />
        <Small icon="ltypes" />
      </div>
      <div className="ml-0.5 flex flex-1 flex-col gap-0.5 pr-0.5">
        <label className="flex h-[22px] items-center border border-[#222933] bg-[#4c566a] pr-px pl-3">
          <span className="size-4 shrink-0 border border-[#9a9a9a] bg-white" />
          <select aria-label="颜色" className="ml-2.5 w-20 flex-1 appearance-none outline-none">
            <option>ByLayer</option>
          </select>
          <Arrow />
        </label>
        <label className="flex h-[22px] items-center border border-[#222933] bg-[#4c566a] pr-px pl-[3px]">
          <span className="h-0.5 w-16 shrink-0 bg-white" />
          <select aria-label="线宽" className="ml-[3px] w-20 flex-1 appearance-none outline-none">
            <option>ByLayer</option>
          </select>
          <Arrow />
        </label>
        <label className="flex h-[22px] items-center border border-[#222933] bg-[#4c566a] pr-px pl-[3px]">
          <span className="h-px w-16 shrink-0 bg-white" />
          <select aria-label="线型" className="ml-[3px] w-20 flex-1 appearance-none outline-none">
            <option>ByLayer</option>
          </select>
          <Arrow />
        </label>
      </div>
    </Panel>
    <Panel title="组" w="w-[67px]">
      <Big icon="group" label="组" w="w-[41px]" />
      <div className="flex flex-col items-center">
        <Small icon="ungroup" />
        <Small icon="groupEdit" />
        <div className="flex h-[22px] w-6 items-center justify-center border border-[#6cb9f7] bg-[#4c6078]">
          <Small icon="groupSel" />
        </div>
      </div>
    </Panel>
    <Panel title="实用工具" w="w-[76px]">
      <Big icon="measure" label="测量" arrow w="w-[51px]" />
      <div className="ml-[3px]">
        <Small icon="quickSel" />
        <Small icon="selectAll" />
        <Small icon="calc" />
      </div>
    </Panel>
    <Panel title="剪贴板" w="w-[79px] border-r-transparent" arrow={false}>
      <Big icon="paste" label="粘贴" arrow w="w-[51px]" />
      <div className="ml-[3px]">
        <Small icon="cut" />
        <Small icon="copyClip" />
      </div>
    </Panel>
  </div>
);

// curved side of a file tab
const Flare = ({ color, flip }) => (
  <svg className={`h-full w-3 shrink-0 ${flip ? "-scale-x-100" : ""}`} viewBox="0 0 12 22" preserveAspectRatio="none">
    <path d="M0 22C6 21 3 0 12 0v22z" fill={color} />
  </svg>
);

const DocTabs = () => (
  <nav className="flex h-[26px] items-end pl-[18px]">
    <div className="flex h-[22px]">
      <Flare color="#2e3643" />
      <button className="w-[112px] bg-[#2e3643] pl-[5px] text-left text-[#b4b8be]">开始</button>
      <div className="w-2.5 rounded-tr-lg bg-[#2e3643]" />
    </div>
    <div className="-ml-2 flex h-[22px] items-stretch">
      <Flare color="#3b4453" />
      <div className="flex w-[109px] items-center justify-between bg-[#3b4453] pr-2 pl-0.5">
        <button className="font-bold text-white">Drawing1*</button>
        <button aria-label="关闭">
          <svg className="size-2" viewBox="0 0 8 8">
            <path d="M0 0l8 8M8 0L0 8" stroke="#b4b8be" strokeWidth="2" />
          </svg>
        </button>
      </div>
      <Flare color="#3b4453" flip />
    </div>
    <button
      aria-label="新建"
      className="mb-1 ml-0.5 flex h-3.5 w-5 items-center justify-center rounded-tl-lg rounded-br-lg bg-[#2e3643]"
    >
      <svg className="size-2" viewBox="0 0 8 8">
        <path d="M4 0v8M0 4h8" stroke="#b4b8be" strokeWidth="2" />
      </svg>
    </button>
  </nav>
);

const drawTools = [
  "line",
  "xline",
  "pline",
  "polygon",
  "rect",
  "arc",
  "circle",
  "revcloud",
  "spline",
  "ellipse",
  "ellArc",
  "insBlock",
  "blkCreate",
  "point",
  "hatch",
  "gradient",
  "region",
  "table",
];

const Toolbar = () => (
  <aside className="w-[29px] shrink-0 bg-[#3b4453]">
    <div className="w-6 border border-t-0 border-[#222933] pb-0.5">
      <div className="mx-[3px] h-[9px] pt-[3px]">
        <div className="h-[3px] border-y border-dotted border-[#b4b8be]" />
      </div>
      {drawTools.map((t) => (
        <button key={t} aria-label={t} className="flex h-[22px] w-full items-center justify-center">
          <Icon name={t} />
        </button>
      ))}
      <button aria-label="text" className="flex h-[22px] w-full items-center justify-center">
        <svg className="size-4" viewBox="0 0 32 32">
          {bigIcons.text}
        </svg>
      </button>
      <button aria-label="addSel" className="flex h-[22px] w-full items-center justify-center">
        <Icon name="addSel" />
      </button>
    </div>
  </aside>
);

const ViewCube = () => (
  <svg
    className="absolute top-2.5 right-3 h-[148px] w-[138px] font-['Noto_Sans_CJK_SC',sans-serif]"
    viewBox="0 0 138 148"
  >
    <circle cx="68" cy="73" r="54" fill="none" stroke="#2b2b2b" strokeWidth="14" />
    <rect x="41" y="46" width="53" height="53" fill="#a6a6a6" stroke="#7c7c7c" />
    <rect x="52" y="56" width="32" height="32" fill="#97989d" />
    <text x="68" y="83" fontSize="29" textAnchor="middle" fill="#3c3f47">
      上
    </text>
    <g fontSize="18" textAnchor="middle" fill="#adadad">
      <text x="68" y="23">北</text>
      <text x="11" y="80">西</text>
      <text x="124" y="80">东</text>
      <text x="68" y="138">南</text>
    </g>
  </svg>
);

const NavBar = () => (
  <div className="absolute top-[212px] right-1 w-8 rounded border border-[#565656] bg-[#474747]">
    <svg className="block h-[211px] w-[30px]" viewBox="0 0 30 211" fill="none" stroke="#2b2e31">
      <circle cx="25" cy="4" r="4" fill="#2f2f2f" stroke="none" />
      <path d="M23 2l4 4M27 2l-4 4" stroke="#555" />
      <path d="M15 19h11v11a11 11 0 1 1-11-11z" />
      <circle cx="15" cy="29" r="6" />
      <path d="M11 34l-3 4M19 34l3 4" />
      <path d="M13 49h5l-2.500 3z" fill="#2b2e31" />
      <path d="M2 55.500h26" stroke="#5c5c5c" />
      <path d="M10 82c-3-4-6-6-6-9 2-2 4 1 5 2L7 64c1-2 3-1 3 1l2 6V62c1-2 3-2 3 0l1 9 2-8c1-2 3-1 3 1l-1 9 2-5c2-2 3 0 3 2-2 5-2 9-5 12z" />
      <path d="M5 90l12 13M17 90L5 103" />
      <path d="M3 88h5l-5 5zM19 88h-5l5 5zM3 105h5l-5-5z" fill="#2b2e31" />
      <circle cx="18" cy="104" r="5" />
      <path d="M22 108l4 4" strokeWidth="3" />
      <path d="M13 120h5l-2.500 3z" fill="#2b2e31" />
      <path d="M12 149v-17h-2l4-5 4 5h-2v17z" />
      <path d="M11 136c-10 2-9 7 4 8 12 0 14-6 4-8M6 144l5-3v6z" />
      <path d="M13 158h5l-2.500 3z" fill="#2b2e31" />
      <path d="M2 164.500h26" stroke="#5c5c5c" />
      <path d="M4 170h5v5H4zM12 170h5v5h-5zM20 170h5v5h-5zM4 179h15v13H4z" />
      <path d="M9 182v8l6-4z" fill="#2b2e31" />
      <circle cx="25" cy="206" r="4" fill="#2f2f2f" stroke="none" />
      <path d="M23 206h4" stroke="#666" />
    </svg>
  </div>
);

// command text: latin runs use the fixed-width face, one size down
const Mono = ({ children }) =>
  children.split(/([\x20-\x7e]+)/).map((s, i) =>
    i % 2 ? (
      <span key={i} className="font-['DejaVu_Sans_Mono',monospace] text-[12px] whitespace-pre">
        {s}
      </span>
    ) : (
      s
    )
  );

const history = [
  { text: "命令:", style: "bg-[#3f3f3f] text-[#a8a8a8]" },
  { text: "命令: _polygon 输入侧面数 <8>:", style: "bg-[#4c4c4c] text-[#c0c0c0]" },
  { text: "指定正多边形的中心点或 [边(E)]:", style: "bg-[#5c5c5c] text-[#ececec]" },
];

const CommandLine = () => (
  <div className="absolute right-[380px] bottom-0 left-[380px]">
    <ul className="mb-[3px] ml-[62px] flex flex-col items-start gap-[5px] text-[13px] leading-[15px]">
      {history.map((h) => (
        <li key={h.text} className={`flex h-[15px] items-center rounded-[2px] px-0.5 ${h.style}`}>
          <Mono>{h.text}</Mono>
        </li>
      ))}
    </ul>
    <div className="flex h-[27px] items-center rounded-l border-y border-[#2c3340] bg-[#2c3340]">
      <svg className="ml-1 h-[18px] w-[5px]" viewBox="0 0 5 18">
        <path d="M1 0v18M4 0v18" stroke="#e6e6e6" strokeWidth="2" strokeDasharray="2 1" />
      </svg>
      <button aria-label="关闭" className="ml-1.5">
        <svg className="size-[9px]" viewBox="0 0 9 9">
          <path d="M0 0l9 9M9 0L0 9" stroke="#e6e6e6" strokeWidth="2" />
        </svg>
      </button>
      <button aria-label="自定义" className="ml-3">
        <svg className="h-3.5 w-3.5" viewBox="0 0 14 14">
          <path d="M0 12l7-6c-1-3 1-6 5-6l-2 3 1 2 3-2c0 4-3 6-6 5l-6 6z" fill="#f0f0f0" />
        </svg>
      </button>
      <div className="ml-1.5 flex h-full flex-1 items-center bg-white pr-1 pl-1 text-[13px] text-black">
        <span className="opacity-60">
          <Icon name="polygon" />
        </span>
        <svg className="ml-0.5 h-1 w-2" viewBox="0 0 8 4">
          <path d="M0 0h8L4 4z" fill="#555" />
        </svg>
        <b className="ml-1.5 font-['DejaVu_Sans_Mono',monospace] text-[12px]">POLYGON</b>
        <span className="ml-1">输入选项</span>
        <span className="ml-1.5">
          <Mono>[</Mono>
        </span>
        <button className="h-4 rounded-[3px] bg-[#d0d0d0] leading-4">
          内接于圆<Mono>(</Mono>
          <span className="text-[#0000ff]">
            <Mono>I</Mono>
          </span>
          <Mono>)</Mono>
        </button>
        <button className="ml-1 h-4 rounded-[3px] bg-[#d0d0d0] leading-4">
          外切于圆<Mono>(</Mono>
          <span className="text-[#0000ff]">
            <Mono>C</Mono>
          </span>
          <Mono>)</Mono>
        </button>
        <Mono>{"] <I>:"}</Mono>
        <input aria-label="命令" className="min-w-0 flex-1 outline-none" />
        <svg className="h-1 w-2" viewBox="0 0 8 4">
          <path d="M0 4h8L4 0z" fill="#555" />
        </svg>
      </div>
    </div>
  </div>
);

const DynamicInput = () => {
  const [picked, setPicked] = useState("I");
  return (
    <>
      <div className="absolute top-[318px] left-[606px] h-[25px] w-[66px] border border-[#c8c37c] bg-[#15135a] pl-[3px] leading-5 text-[#cfcb8c]">
        输入选项
      </div>
      <ul className="absolute top-[347px] left-[606px] w-[104px]">
        <li>
          <button
            onClick={() => setPicked("I")}
            className="flex h-5 w-full items-center border-x border-white bg-[#0078d7] text-white"
          >
            <span className={`ml-[5px] size-1.5 rounded-full ${picked === "I" ? "bg-black" : ""}`} />
            <span className="ml-2 flex h-5 flex-1 items-center border-b border-white pl-[3px]">内接于圆(I)</span>
          </button>
        </li>
        <li>
          <button
            onClick={() => setPicked("C")}
            className="mt-px flex h-[22px] w-full items-center border border-[#808080] bg-white text-[#808080]"
          >
            <span className={`ml-[5px] size-1.5 rounded-full ${picked === "C" ? "bg-black" : ""}`} />
            <span className="ml-[11px]">外切于圆(C)</span>
          </button>
        </li>
      </ul>
      <svg className="absolute top-[362px] left-[519px] h-9 w-[84px]" viewBox="0 0 84 36">
        <path d="M2 34L64 9" stroke="#ff0000" strokeWidth="3" strokeLinecap="round" />
        <path d="M82 1L55 5l8 4-1 8z" fill="#ff0000" />
      </svg>
      <svg className="absolute top-[360px] left-[696px] h-[21px] w-[13px]" viewBox="0 0 13 21">
        <path d="M1 1v16l4-4 3 6 2-1-3-6h5z" fill="#fff" stroke="#000" />
      </svg>
    </>
  );
};

const Canvas = () => (
  <main className="relative mr-[3px] flex-1 overflow-hidden bg-black">
    <div className="absolute top-1.5 left-[3px] flex leading-4 text-white">
      [<b>−</b>]<span>[俯视]</span>
      <span className="ml-0.5">[二维线框]</span>
    </div>
    <ViewCube />
    <button className="absolute top-[170px] right-[58px] flex h-[18px] w-12 items-center justify-between rounded border border-[#77768a] bg-[#8f8e9c] pr-1 pl-[3px] font-['Liberation_Sans',sans-serif] text-[11px] text-[#42424a]">
      WCS
      <svg className="h-1 w-2" viewBox="0 0 8 4">
        <path d="M0 0h8L4 4z" fill="#a9a9b3" stroke="#6d6d78" />
      </svg>
    </button>
    <NavBar />
    <DynamicInput />
    <svg className="absolute bottom-4 left-4 h-[74px] w-[74px]" viewBox="0 0 74 74" fill="none" stroke="#fff">
      <path d="M4.500 20v49.500H55M.5 64.500h9v9h-9z" />
      <path d="M6 3l6.500 6L19 3M12.500 9v7M59 55l13 13M72 55L59 68" />
    </svg>
    <CommandLine />
    <div className="absolute right-[283px] bottom-1.5 flex h-[25px] w-[60px] items-center justify-center gap-1 rounded-md bg-white font-['Liberation_Sans','Noto_Sans_CJK_SC',sans-serif] text-[13px] text-[#333]">
      CH
      <svg className="size-[11px]" viewBox="0 0 11 11">
        <path d="M4 0c8 1 8 9-1 10.500-1 0-2-.5-2-1 5-1 6-5 3-9.500z" fill="none" stroke="#333" />
      </svg>
      简
    </div>
  </main>
);

const St = ({ name, on }) => (
  <button
    aria-label={name}
    aria-pressed={!!on}
    className={`flex h-6 items-center justify-center ${on ? "mx-px w-[22px] bg-[#618fc3]" : "w-6"}`}
  >
    <Icon name={name} />
  </button>
);

const StArrow = () => (
  <button aria-label="更多" className="flex w-4 items-center justify-center">
    <Tri />
  </button>
);

const Group = ({ children }) => <div className="flex bg-[#3b4453]">{children}</div>;

const BottomFlare = ({ color, flip }) => (
  <svg className={`h-full w-2.5 ${flip ? "-scale-x-100" : ""}`} viewBox="0 0 10 17" preserveAspectRatio="none">
    <path d="M0 0C5 1 3 17 10 17V0z" fill={color} />
  </svg>
);

const layouts = ["模型", "布局1", "布局2"];

const StatusBar = () => (
  <footer className="relative flex h-[29px] border-t border-[#3b4453] bg-[#222933] text-[#e6e6e6]">
    <nav className="flex h-[17px] flex-1 items-start pl-[11px]">
      {layouts.map((t, i) => (
        <div key={t} className="-mr-[7px] flex h-[17px]">
          <BottomFlare color={i ? "#2e3643" : "#3b4453"} />
          <button
            className={`flex h-[17px] items-center px-[5px] ${
              i ? "bg-[#2e3643] text-[#b4b8be]" : "bg-[#3b4453] font-bold text-white"
            }`}
          >
            {t}
          </button>
          <BottomFlare color={i ? "#2e3643" : "#3b4453"} flip />
        </div>
      ))}
      <button
        aria-label="新建布局"
        className="ml-3 flex h-[15px] w-[22px] items-center justify-center rounded-tl-lg rounded-br-lg bg-[#2e3643]"
      >
        <svg className="size-2" viewBox="0 0 8 8">
          <path d="M4 0v8M0 4h8" stroke="#b4b8be" strokeWidth="2" />
        </svg>
      </button>
    </nav>
    <div className="mt-px flex h-6 shrink-0 gap-[3px] pr-[5px]">
      <div className="flex w-[180px] items-center justify-end bg-[#3b4453] pr-1 text-[11px] text-[#c8cbd0]">
        810.0811, 711.8557, 0.0000
      </div>
      <button className="w-[30px] bg-[#3b4453] font-medium">模型</button>
      <Group>
        <St name="stGrid" />
        <St name="stSnap" />
        <StArrow />
      </Group>
      <div className="flex gap-px">
        <Group>
          <St name="stInfer" />
        </Group>
        <Group>
          <St name="stDyn" on />
        </Group>
        <Group>
          <St name="stOrtho" />
          <St name="stPolar" />
          <StArrow />
          <St name="stIso" />
          <StArrow />
        </Group>
        <Group>
          <St name="stTrack" on />
          <St name="stOsnap" on />
          <StArrow />
        </Group>
        <Group>
          <St name="stLw" />
        </Group>
        <Group>
          <St name="stTrans" on />
        </Group>
        <Group>
          <St name="stCycle" />
        </Group>
        <Group>
          <St name="st3d" />
          <StArrow />
        </Group>
      </div>
      <Group>
        <St name="stUcs" on />
        <St name="stFilter" />
        <StArrow />
        <St name="stGizmo" on />
        <StArrow />
      </Group>
      <Group>
        <St name="stAnnoVis" on />
        <St name="stAnnoAuto" />
        <St name="stAnno" />
        <button className="flex w-[74px] items-center justify-between pr-1 pl-1 text-[11px] whitespace-nowrap">
          1:1 / 100%
          <Tri />
        </button>
      </Group>
      <div className="flex gap-px">
        <Group>
          <St name="stGear" />
          <StArrow />
        </Group>
        <Group>
          <St name="stPlus" />
        </Group>
      </div>
      <div className="flex gap-px">
        <label className="flex w-[97px] items-center bg-[#3b4453] pr-1 pl-1">
          <Icon name="stRuler" />
          <select aria-label="单位" className="ml-2.5 w-10 flex-1 appearance-none font-medium outline-none">
            <option>小数</option>
          </select>
          <Tri />
        </label>
        <Group>
          <St name="stProps" />
        </Group>
      </div>
      <div className="flex gap-px">
        <Group>
          <St name="stLockUi" />
          <StArrow />
        </Group>
        <Group>
          <St name="stIsolate" />
        </Group>
      </div>
      <Group>
        <St name="stHw" on />
      </Group>
      <Group>
        <St name="stClean" />
        <St name="stMenu" />
      </Group>
    </div>
    <div className="pointer-events-none absolute right-[7px] bottom-2 flex items-start">
      <svg className="h-10 w-11" viewBox="0 0 44 40">
        <path d="M1 25C3 12 17 0 38 0L28 4C17 7 11 14 10 24l-4-3z" fill="#1f6fa8" fillOpacity="0.800" />
        <path d="M12 16C20 8 30 6 38 2 30 10 20 12 14 20z" fill="#174a7c" fillOpacity="0.900" />
        <path d="M22 15c14-3 22 4 17 12-5 8-18 12-28 11 12-3 20-7 22-12 2-6-4-9-11-11z" fill="#2c7d3e" fillOpacity="0.700" />
        <path d="M4 38c10-3 20-7 26-15 2 8-12 16-26 15z" fill="#8c9a3a" fillOpacity="0.600" />
      </svg>
      <div className="flex flex-col font-['Noto_Sans_CJK_SC',sans-serif]">
        <span className="text-[21px] leading-6 font-bold text-[#174a7c]">极光下载站</span>
        <span className="font-['Liberation_Sans',sans-serif] text-[16px] leading-5 font-bold text-[#2f8a45]/60">
          www.xz7.com
        </span>
      </div>
    </div>
  </footer>
);

const App = () => {
  const [tab, setTab] = useState("默认");

  return (
    <div className="flex min-h-screen bg-[#f4f6f8] px-0.5 font-['Noto_Sans','Noto_Sans_CJK_SC',sans-serif] text-[12px] leading-4 text-[#e4e6e8]">
      <div className="flex min-w-0 flex-1 flex-col border-x border-t border-[#0a8fd6] bg-[#222933]">
        <TitleBar />
        <nav className="flex h-5 items-center justify-between border-b border-[#3b4453] pr-1 pl-[17px] text-[#b4b8be]">
          <div className="flex gap-[25px]">
            {menus.map((m) => (
              <button key={m} className="whitespace-nowrap">
                {m}
              </button>
            ))}
          </div>
          <div className="flex items-center gap-1.5">
            <WinIcon kind="min" />
            <WinIcon kind="restore" />
            <WinIcon kind="close" />
          </div>
        </nav>
        <nav className="flex h-6 items-end pl-1.5 text-[#b4b8be]">
          {ribbonTabs.map((t) => (
            <button
              key={t}
              onClick={() => setTab(t)}
              className={`h-5 px-2.5 pt-0.5 whitespace-nowrap ${tab === t ? "bg-[#3b4453] text-white" : ""}`}
            >
              {t}
            </button>
          ))}
          <button aria-label="最小化功能区" className="ml-6 flex h-5 items-center gap-1.5">
            <svg className="h-2 w-[15px]" viewBox="0 0 15 8">
              <path d="M0 0h15v8H0z" fill="#f0f0f0" />
              <path d="M5 5.500h5L7.500 2.500z" fill="#444" />
            </svg>
            <SmallTri />
          </button>
        </nav>
        <Ribbon />
        <DocTabs />
        <div className="mr-[3px] ml-[3px] h-1 bg-[#3b4453]" />
        <div className="flex flex-1 pl-[3px]">
          <Toolbar />
          <Canvas />
        </div>
        <StatusBar />
      </div>
    </div>
  );
};

export default App;
